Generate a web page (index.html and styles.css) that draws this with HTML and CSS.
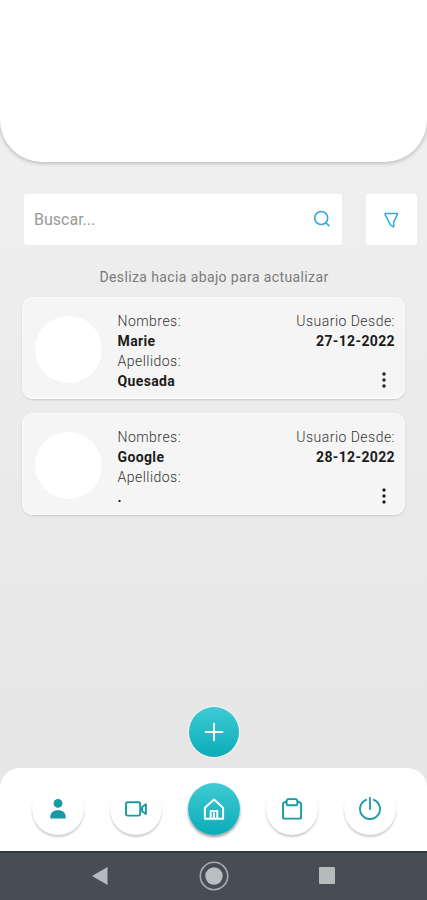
FILE: index.html
```
<!DOCTYPE html>
<html lang="es">
<head>
<meta charset="utf-8">
<title>Usuarios</title>
<link rel="stylesheet" href="styles.css">
</head>
<body>
<div class="app">
  <header class="header"></header>
  <main class="content">
    <div class="tools">
      <div class="search">
        <span>Buscar...</span>
        <svg width="18" height="18" viewBox="0 0 18 18" fill="none" stroke="#2ea9dc" stroke-width="1.6" stroke-linecap="round"><circle cx="8.2" cy="8" r="6.5"/><path d="M13 12.8L15.8 15.6"/></svg>
      </div>
      <div class="filter">
        <svg width="16" height="18" viewBox="0 0 16 18" fill="none" stroke="#2ea9dc" stroke-width="1.5" stroke-linejoin="round"><path d="M1.2 2.4H13.2V3.8L9.7 11V16L6.5 13.8L1.2 3.8Z"/></svg>
      </div>
    </div>
    <p class="hint"><span>Desliza hacia abajo para actualizar</span></p>
    <article class="card">
      <div class="avatar"></div>
      <div class="names"><span>Nombres:</span><b>Marie</b><span>Apellidos:</span><b>Quesada</b></div>
      <div class="since"><span>Usuario Desde:</span><b>27-12-2022</b>
        <svg class="more" width="4" height="18" viewBox="0 0 4 18" fill="#222"><circle cx="2" cy="3" r="1.7"/><circle cx="2" cy="9" r="1.7"/><circle cx="2" cy="15" r="1.7"/></svg>
      </div>
    </article>
    <article class="card">
      <div class="avatar"></div>
      <div class="names"><span>Nombres:</span><b>Google</b><span>Apellidos:</span><b>.</b></div>
      <div class="since"><span>Usuario Desde:</span><b>28-12-2022</b>
        <svg class="more" width="4" height="18" viewBox="0 0 4 18" fill="#222"><circle cx="2" cy="3" r="1.7"/><circle cx="2" cy="9" r="1.7"/><circle cx="2" cy="15" r="1.7"/></svg>
      </div>
    </article>
  </main>
  <div class="add">
    <svg width="20" height="20" viewBox="0 0 20 20" stroke="#fff" stroke-width="2" stroke-linecap="round"><path d="M10 1.7V18.3M1.7 10H18.3"/></svg>
  </div>
  <nav class="nav">
    <div class="btn"><svg viewBox="0 0 24 24" fill="#1799a6"><circle cx="12" cy="6.4" r="4.4"/><path d="M4.3 21.5V20C4.3 15.8 7.2 13.2 12 13.2S19.7 15.8 19.7 20V21.5Z"/></svg></div>
    <div class="btn"><svg viewBox="0 0 24 24" fill="none" stroke="#1799a6" stroke-width="1.9" stroke-linejoin="round"><rect x="2" y="5.2" width="14.2" height="13.4" rx="1.8"/><path d="M18.2 10L21.9 7.2V17L18.2 14.2ZM16.2 12.1H18.2"/></svg></div>
    <div class="btn active"><svg viewBox="0 0 24 24" fill="none" stroke="#fff" stroke-width="2" stroke-linejoin="round"><path d="M2.9 10.8L12 2.6L21.1 10.8V21.7H2.9ZM8.7 21.7V13.9H15.3V21.7M12 15.5V21.7"/></svg></div>
    <div class="btn"><svg viewBox="0 0 24 24" fill="none" stroke="#1799a6" stroke-width="1.9" stroke-linejoin="round"><path d="M7.6 2.1H16.4L17.4 4V7Q17.4 8.3 16.1 8.3H7.9Q6.6 8.3 6.6 7V4ZM6.6 4.6H5.6L3 6.6V19.9Q3 21.6 4.7 21.6H19.4Q21.1 21.6 21.1 19.9V6.6L18.4 4.6H17.4"/></svg></div>
    <div class="btn"><svg viewBox="0 0 24 24" fill="none" stroke="#1799a6" stroke-width="1.8" stroke-linecap="round"><path d="M12 .8V12M8.1 2.8A10 10 0 1 0 15.9 2.8"/></svg></div>
  </nav>
  <footer class="system">
    <svg width="16" height="18" viewBox="0 0 16 18" fill="#b3bbbd"><path d="M0 9L15.5 0V18Z"/></svg>
    <svg width="30" height="30" viewBox="0 0 30 30"><circle cx="15" cy="15" r="13.7" fill="none" stroke="#a5adb0" stroke-width="1.6"/><circle cx="15" cy="15" r="8.7" fill="#b9bfc1"/></svg>
    <svg width="16" height="17" viewBox="0 0 16 17"><rect width="16" height="17" rx="1" fill="#b3bbbb"/></svg>
  </footer>
</div>
</body>
</html>
```
FILE: styles.css
```
* { box-sizing: border-box; }
body { margin: 0; font-family: Roboto, sans-serif; }
svg { display: block; flex: none; }
.app {
  width: 427px;
  height: 900px;
  display: flex;
  flex-direction: column;
  overflow: hidden;
  background: linear-gradient(#efefef 160px, #ededed 300px, #e6e6e6 770px);
}
.header {
  height: 162px;
  flex: none;
  background: #fff;
  border-radius: 0 0 42px 42px;
  box-shadow: 0 1px 4px rgba(0, 0, 0, .27);
}
.content { flex: 1; padding: 32px 10px 0 24px; }
.tools { display: flex; justify-content: space-between; height: 51px; }
.search, .filter { display: flex; align-items: center; background: #fff; border-radius: 3px; }
.search { width: 318px; justify-content: space-between; padding: 0 11px 0 10px; color: #999; font-size: 16px; }
.search svg { margin-top: -1px; }
.filter { width: 51px; justify-content: center; }
.hint { margin: 22px 0 10px; line-height: 20px; padding-left: 75.5px; font-size: 14px; letter-spacing: .38px; color: #7a7a7a; }
.card {
  width: 383px;
  height: 102px;
  margin: 0 0 14px -2px;
  padding: 14px 10px 0 13px;
  display: flex;
  background: #f5f5f5;
  border-radius: 11px;
  box-shadow: 0 1px 2px rgba(0, 0, 0, .15), inset 0 0 1px 1px #fafafa;
}
.avatar { width: 67px; height: 67px; margin: 5px 15.5px 0 0; border-radius: 50%; background: #fff; }
.names, .since { display: flex; flex-direction: column; font-size: 14px; line-height: 20px; font-weight: 300; letter-spacing: .47px; color: #333; }
.names b, .since b { font-weight: 700; color: #1c1c1c; letter-spacing: .37px; }
.since { margin-left: auto; align-items: flex-end; }
.more { margin: 20px 9px 0 0; }
.add {
  width: 50px;
  height: 50px;
  flex: none;
  margin: 0 0 11px 189px;
  display: grid;
  place-items: center;
  border-radius: 50%;
  background: linear-gradient(#3fcbd4, #0aacb8);
  box-shadow: 0 0 1px 1px rgba(255, 255, 255, .5);
}
.nav {
  height: 83px;
  flex: none;
  padding: 0 31px 2px 32px;
  display: flex;
  align-items: center;
  justify-content: space-between;
  background: #fff;
  border-radius: 20px 20px 0 0;
}
.btn {
  width: 52px;
  height: 52px;
  display: grid;
  place-items: center;
  border-radius: 50%;
  background: #fff;
  box-shadow: 0 2px 2px rgba(0, 0, 0, .2);
}
.btn svg { width: 24px; height: 24px; }
.btn.active { background: linear-gradient(#3fcbd4, #0aacb8); box-shadow: 0 2px 3px rgba(0, 0, 0, .4); }
.system {
  height: 49px;
  flex: none;
  display: flex;
  align-items: center;
  justify-content: space-between;
  padding: 0 92px 2px;
  background: #464e53;
  border-top: 2px solid #263c42;
}
```
